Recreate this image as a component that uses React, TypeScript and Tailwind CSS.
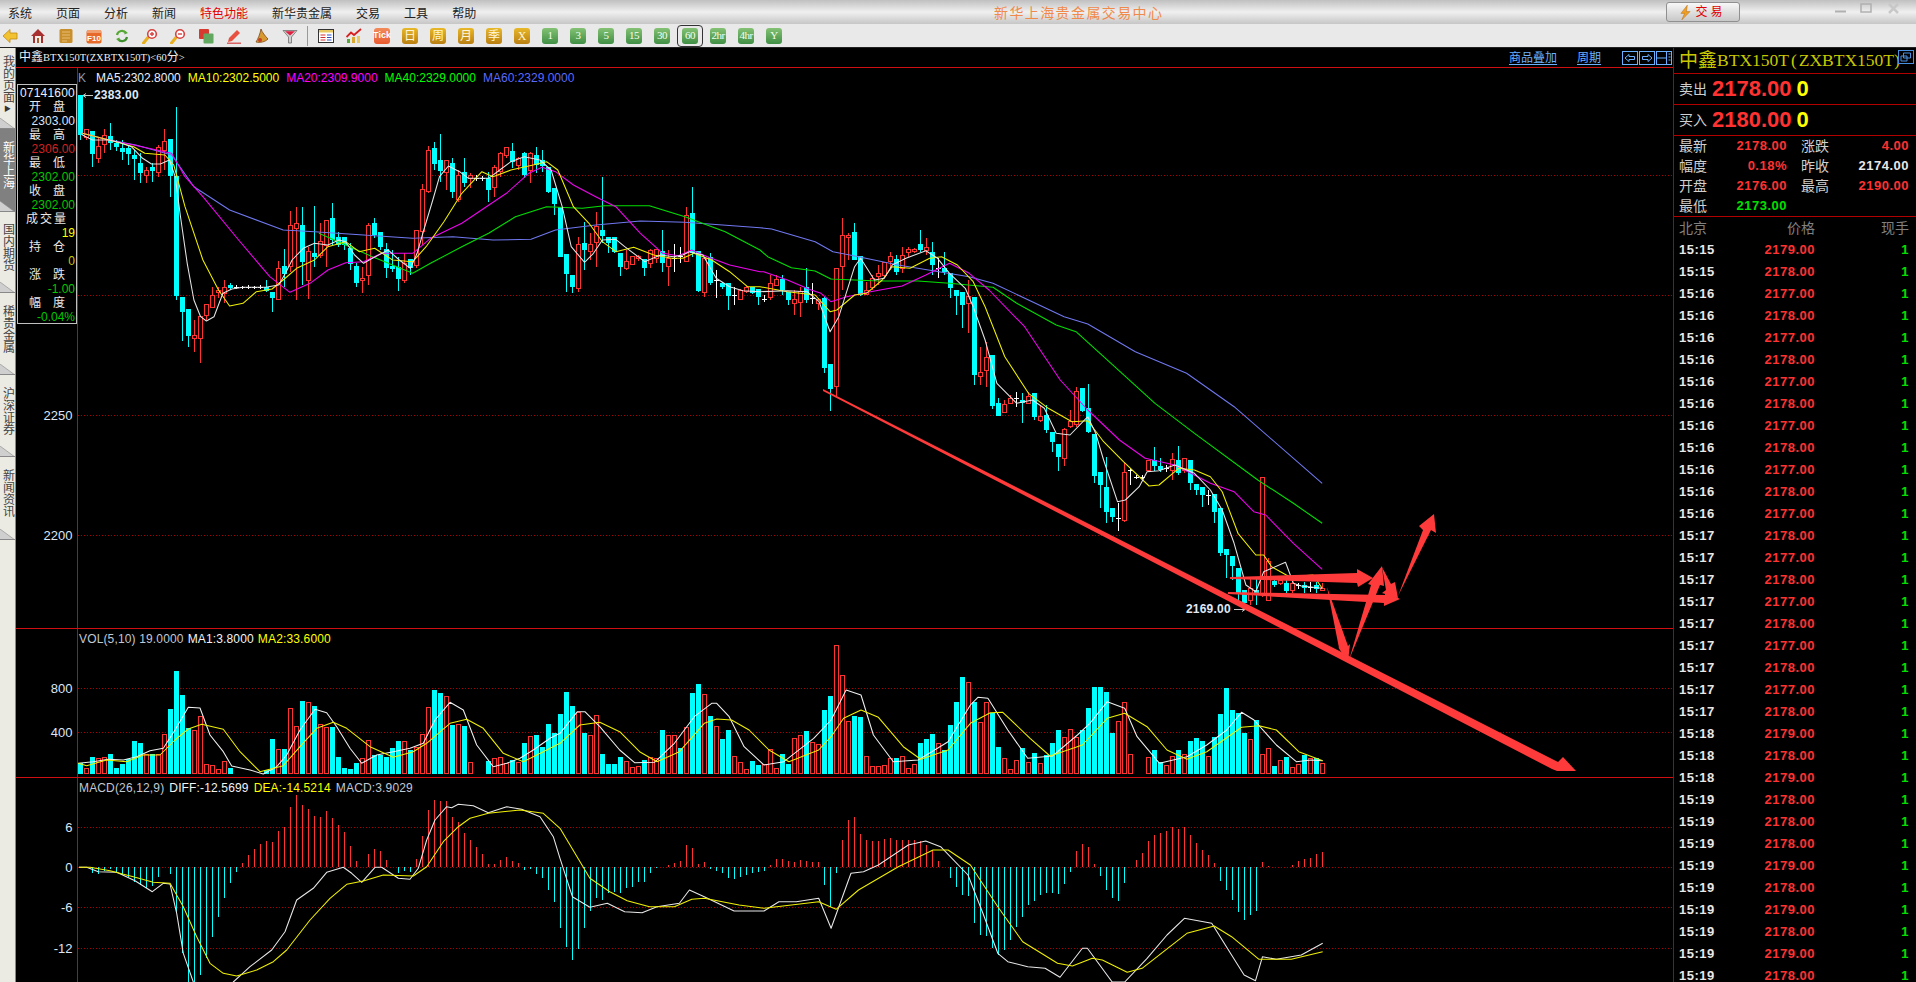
import React from "react";

type Candle = [string, number, number, number, number];
type Pt = [number, number];

const RED = "#ff3232";
const CYAN = "#00ffff";
const slotX = (i: number) => 78 + 6 * i;

// kline bodies traced at 3x: [kind, bodyTop, bodyBottom, wickTop, wickBottom], y = base + v / 3
const candlesA: Candle[] = [
  ["c",15,135,15,150],["r",118,142,118,150],["c",123,192,123,232],["r",168,206,142,220],["r",135,162,118,190],
  ["c",138,160,98,180],["c",158,170,150,182],["c",174,185,150,210],["c",174,192,165,225],["c",196,206,180,270],
  ["c",220,250,190,280],["r",242,256,230,278],["c",230,242,220,275],["r",172,248,165,262],["r",155,180,118,240],
  ["c",148,258,148,320],["c",258,618,52,630],["c",622,665,620,752],["c",657,738,657,772],["r",735,745,690,785],
  ["r",680,745,680,818],["r",643,675,643,690],["r",615,652,590,655],["r",600,608,590,625],["r",592,610,570,640],
  ["c",585,595,578,600],["w",592,592,586,598],["w",592,592,588,596],["w",592,592,586,598],["w",592,592,588,596],
  ["w",592,592,586,598],["c",590,602,570,605],["c",605,623,605,665],["r",535,628,512,630],["c",528,553,477,590],
  ["r",405,530,362,545],["r",400,415,352,630],["c",405,515,350,585],["r",485,570,470,628],["c",490,500,348,530],
  ["r",455,497,400,505],["r",390,465,390,530],["c",385,450,340,465],["c",440,465,425,470],["c",440,465,440,480],
  ["c",475,522,460,540],["c",528,580,520,590],["r",565,572,530,608],["r",405,555,400,585],["c",400,435,385,445],
  ["c",425,472,425,480],["c",478,535,458,565],["c",528,537,480,545],["c",530,568,500,602],["r",520,572,490,580],
  ["c",508,535,508,555],["r",420,525,420,535],["r",298,425,282,465],["r",182,305,168,310],["c",175,222,155,240],
  ["c",210,243,132,275],["r",212,248,212,300],["c",220,305,205,325],["r",255,328,240,335],["c",245,278,205,290],
  ["r",255,265,248,295],["w",263,263,255,272],["w",265,265,258,272],["c",265,300,245,335],["r",232,293,225,320],
  ["r",190,245,185,260],["r",172,197,172,205],["c",183,215,158,235],["r",205,225,200,240],["c",190,255,185,265],
  ["r",190,240,185,280],["c",195,225,170,250],["c",210,228,180,245],["c",232,305,232,310],["c",295,342,295,375],
  ["c",350,500,350,500],["c",492,552,492,605],["c",555,590,555,608],["r",462,595,440,605],["c",458,480,395,540],
  ["r",462,485,430,510],["r",410,458,365,530],["c",420,438,260,460],["c",442,458,442,490],["c",442,487,440,490],
  ["c",490,530,490,558],["r",515,535,480,540],["r",498,522,498,525],["r",500,505,495,512],["c",508,535,508,558],
  ["r",482,520,478,535],["r",478,505,478,520],["c",482,520,420,545],["r",505,530,480,588],["w",505,505,462,545],
  ["w",498,498,470,520],["r",375,515,352,515],["c",370,490,292,500],["c",484,602,484,605],["r",505,608,505,622],
  ["c",500,580,490,585],["w",570,570,540,625],["c",580,590,575,598],["c",578,618,578,660],["w",615,615,590,645],
];

const candlesB: Candle[] = [
  ["r",270,298,268,300],["r",262,275,258,278],["c",260,278,260,282],["c",268,292,268,315],["w",298,298,285,305],
  ["r",250,293,225,300],["r",238,255,225,258],["c",238,270,225,285],["c",275,300,275,315],["r",298,310,270,345],
  ["r",275,308,260,350],["c",262,300,205,310],["w",295,295,250,312],["r",298,310,295,330],["c",295,503,290,520],
  ["c",492,568,492,632],["r",205,560,205,590],["r",105,200,55,270],["r",105,113,100,180],["c",97,180,70,180],
  ["c",168,285,168,288],["r",270,282,245,285],["r",235,262,225,270],["r",220,228,195,255],["r",188,225,188,235],
  ["r",170,185,155,210],["c",178,215,165,225],["r",165,205,140,220],["r",148,158,140,170],["r",148,155,145,160],
  ["c",132,150,90,155],["r",142,150,115,165],["c",155,195,125,225],["w",203,203,175,235],["c",205,215,155,225],
  ["c",220,265,220,295],["c",270,287,270,345],["c",277,315,277,385],["r",288,310,240,400],["c",290,525,290,555],
  ["r",518,530,440,555],["r",472,510,425,560],["c",465,618,465,628],["c",610,648,595,648],["r",612,638,600,640],
  ["r",595,610,585,612],["w",595,595,575,620],["c",600,610,580,668],["r",590,610,575,612],["c",580,652,580,660],
  ["r",648,662,615,665],["c",645,690,615,700],["c",697,725,697,755],["c",732,770,732,812],["r",688,775,685,797],
  ["r",665,678,630,685],["r",575,672,560,680],["c",565,632,565,635],["c",625,697,552,700],["c",702,827,702,848],
  ["c",815,855,815,925],["c",862,935,770,970],["c",925,950,925,965],["w",955,955,910,992],["r",818,962,785,965],
  ["w",810,810,805,855],["w",832,832,825,838],["w",832,832,825,838],["r",782,812,782,815],["c",780,797,740,812],
  ["c",797,810,775,815],["w",805,805,795,815],["r",777,812,760,840],["c",780,818,738,825],["r",775,812,775,818],
  ["c",780,848,780,870],["c",852,870,852,885],["c",860,885,860,920],["w",885,885,870,915],["c",882,935,882,970],
  ["c",925,1058,925,1068],["c",1048,1065,1048,1135],["c",1068,1098,1068,1140],["c",1105,1178,1105,1205],["c",1170,1210,1170,1225],
  ["r",1165,1200,1130,1215],["c",1170,1182,1130,1215],["r",832,1180,832,1190],["r",1085,1200,1075,1200],["c",1142,1155,1130,1160],
  ["r",1140,1150,1130,1155],["c",1150,1172,1130,1180],["r",1150,1170,1140,1180],["w",1155,1155,1148,1168],["c",1155,1165,1145,1180],
  ["w",1160,1160,1145,1175],["c",1155,1167,1145,1180],["r",1165,1170,1150,1172],
];

const candles = [
  ...candlesA.map(([k, a, b, c, d]) => [k, 90 + a / 3, 90 + b / 3, 90 + c / 3, 90 + d / 3] as Candle),
  ...candlesB.map(([k, a, b, c, d]) => [k, 200 + a / 3, 200 + b / 3, 200 + c / 3, 200 + d / 3] as Candle),
];

// volume tops, negative = red hollow bar
const volA = [
  430,-445,411,-415,-412,402,445,432,418,363,369,-403,403,-403,-343,267,153,225,325,-330,-288,-433,-436,-448,-423,444,-460,-460,-460,-461,
  -461,450,357,-388,387,-265,-318,243,-247,258,-313,-322,321,411,444,447,429,-415,-361,405,405,411,384,363,-364,390,-380,-343,-262,210,
  218,-229,315,-313,318,-427,-460,-460,423,-415,-412,-430,420,-426,369,-349,345,380,312,340,
];
const volB = [
  252,186,228,-246,309,-316,-256,372,402,402,381,-393,-412,-409,391,-380,-385,300,-316,-316,354,-292,189,162,-193,258,-289,327,300,-379,
  -397,-418,393,405,-403,-357,-415,372,402,-325,-316,303,-337,-342,240,198,-45,-136,-274,258,260,-379,-408,-408,-405,-384,384,-379,-415,-403,
  339,327,312,-339,360,285,216,141,-156,216,-276,-216,250,351,-385,-417,-391,354,-397,369,-399,375,339,300,-321,-297,-321,300,234,171,
  171,186,309,-273,-216,-372,-429,-429,-381,360,396,-405,-379,360,-372,333,324,333,-379,321,252,174,240,249,309,-327,270,-372,-354,408,
  -390,381,-411,-402,375,-384,384,-400,
];
const volumes = [
  ...volA.map((v) => ({ red: v < 0, top: 620 + Math.abs(v) / 3 })),
  ...volB.map((v) => ({ red: v < 0, top: 630 + Math.abs(v) / 3 })),
];

const macdA = [
  742,742,758,762,752,748,758,765,772,785,795,803,797,772,742,762,880,1000,1086,1086,1065,1015,950,890,835,790,755,
  728,705,687,672,663,666,633,621,561,525,555,567,588,591,574,594,615,636,678,723,742,702,687,693,720,742,
  760,752,755,717,648,570,540,543,543,591,606,639,660,681,702,732,732,720,711,723,729,750,747,763,774,810,845,
];
const macdB = [
  893,950,990,957,895,842,805,810,790,785,788,775,770,755,755,730,714,712,705,698,692,645,653,702,696,716,722,730,745,748,
  742,735,728,725,722,705,686,686,693,697,690,693,696,696,765,830,728,630,570,561,612,630,632,632,628,625,630,630,630,630,
  632,645,660,692,712,745,770,795,797,878,915,918,955,975,960,930,892,862,825,812,795,790,790,792,762,725,662,642,650,702,
  738,780,805,812,760,712,690,670,632,615,608,603,590,597,590,615,638,660,675,700,752,780,810,845,870,855,843,697,708,710,
  710,711,705,693,688,683,672,666,
];
const macdBars = [...macdA.map((v) => 620 + v / 3), ...macdB.map((v) => 630 + v / 3)];

const trace = (ox: number, oy: number, sx: number, v: number[]): Pt[] => {
  const out: Pt[] = [];
  for (let i = 0; i < v.length; i += 2) out.push([ox + v[i] / sx, oy + v[i + 1] / 3]);
  return out;
};
const joinLines = (a: Pt[], b: Pt[]) => a.concat(b.filter((p) => p[0] > a[a.length - 1][0]));
const toPts = (p: Pt[]) => p.map(([x, y]) => `${x.toFixed(1)},${y.toFixed(1)}`).join(" ");

const left = (v: number[]) => trace(60, 90, 2.24, v);
const rightSide = (v: number[]) => trace(740, 200, 2.53, v);

const ma5 = joinLines(
  left([50,135,73,150,110,150,135,158,160,170,185,205,205,222,225,222,245,210,258,260,270,380,285,520,300,630,315,680,328,693,345,680,365,610,385,597,410,592,460,592,490,585,505,550,520,510,545,475,570,460,600,465,625,450,640,455,660,495,680,520,700,505,735,480,760,510,785,535,800,490,815,420,835,330,850,260,870,228,895,245,915,265,960,265,985,240,1010,215,1040,200,1075,210,1100,240,1125,350,1145,470,1175,517,1195,490,1215,450,1245,448,1265,470,1310,515,1345,495,1375,500,1395,495,1410,485,1440,495,1470,565,1500,590,1530,602,1568,605]),
  rightSide([120,272,170,275,200,305,228,395,250,350,290,200,305,175,340,240,365,235,385,195,420,175,470,152,500,175,530,220,570,265,590,320,620,420,650,550,700,610,740,600,770,625,800,700,835,705,880,650,900,700,920,780,955,905,975,900,1010,860,1030,815,1060,812,1100,795,1150,820,1190,870,1220,930,1250,1030,1280,1155,1305,1175,1325,1115,1380,1087,1400,1150,1420,1158,1473,1165]),
);
const ma10 = joinLines(
  left([50,130,110,150,165,170,190,190,235,195,255,225,280,350,320,510,355,600,380,648,410,640,440,605,475,597,500,570,530,535,570,510,600,470,640,455,670,485,705,475,745,510,790,515,820,470,860,395,900,310,945,245,970,260,1010,240,1060,225,1090,215,1115,240,1150,350,1185,400,1215,455,1245,485,1285,472,1330,495,1370,505,1395,505,1420,490,1460,510,1500,545,1540,590,1568,590]),
  rightSide([120,275,190,285,228,335,245,330,290,285,320,280,360,240,385,200,430,205,480,175,510,170,550,195,590,245,620,320,670,470,730,580,780,625,840,665,880,662,920,725,970,785,1035,858,1060,855,1110,805,1150,810,1190,830,1220,875,1260,1000,1305,1065,1325,1065,1345,1100,1390,1130,1450,1125,1473,1165]),
);
const ma20 = joinLines(
  left([50,130,110,150,165,165,250,190,280,260,320,320,400,450,470,560,515,607,560,580,600,540,640,518,680,515,720,490,790,490,830,445,900,400,950,355,1000,310,1050,250,1080,232,1110,245,1150,285,1200,320,1245,350,1300,430,1350,490,1385,497,1415,480,1450,500,1500,525,1568,545]),
  rightSide([60,215,120,240,180,270,205,280,230,305,270,290,330,275,410,258,470,225,530,190,580,220,630,270,720,380,810,540,880,630,960,720,1025,775,1100,795,1190,850,1250,875,1300,935,1330,945,1400,1030,1473,1108]),
);
const ma40 = joinLines(
  left([580,430,640,465,700,500,790,550,830,520,900,470,960,430,1020,380,1090,350,1170,355,1220,347,1320,347,1400,380,1490,425,1568,480]),
  rightSide([70,170,130,203,190,213,230,237,350,243,450,243,530,250,640,262,700,310,800,375,850,395,920,470,1050,610,1150,700,1310,840,1400,910,1473,970]),
);
const ma60 = joinLines(
  left([50,130,110,150,170,165,250,195,300,290,380,360,500,420,570,425,680,435,790,445,880,440,970,450,1055,448,1110,420,1200,405,1300,393,1400,397,1568,413]),
  rightSide([80,87,190,125,235,155,300,170,400,195,580,230,640,250,820,350,880,372,1000,455,1130,520,1250,620,1473,850]),
);

const volLeft = (v: number[]) => trace(60, 620, 3, v);
const volRight = (v: number[]) => trace(560, 630, 2.01, v);
const vol1 = joinLines(
  volLeft([55,430,100,425,145,418,190,420,230,410,270,392,310,385,345,330,385,262,420,264,450,345,490,395,515,438,570,450,610,462,650,440,680,405,720,330,765,268,800,278,830,320,870,385,905,430,950,405,1000,395,1050,385,1090,370,1125,300,1170,247,1210,270,1250,375,1300,440,1340,430,1380,415,1420,390,1470,355,1500,340]),
  volRight([35,245,50,245,80,290,120,360,150,398,190,397,230,340,270,260,305,220,315,220,340,260,370,350,410,405,450,395,510,325,545,270,575,180,605,195,630,315,670,395,720,390,780,335,825,225,840,202,860,205,900,300,940,385,990,378,1040,315,1065,280,1100,215,1135,235,1160,320,1205,400,1260,380,1300,345,1340,300,1370,247,1395,270,1440,345,1480,395,1510,390,1533,392]),
);
const vol2 = joinLines(
  volLeft([55,430,80,437,140,420,200,425,250,405,300,405,345,360,385,327,425,313,490,328,540,395,600,455,670,437,720,380,770,325,820,307,860,325,930,380,1000,412,1060,395,1100,370,1170,310,1220,298,1270,325,1330,400,1390,425,1450,395,1500,370]),
  volRight([40,285,80,277,120,305,160,365,195,395,240,365,290,280,315,267,345,270,380,300,420,360,460,395,520,360,545,320,570,265,605,240,640,262,690,350,725,388,780,360,825,280,865,248,890,247,945,325,985,378,1050,345,1100,265,1135,250,1180,290,1220,360,1260,388,1300,365,1370,292,1405,287,1440,300,1485,365,1533,392]),
);
const diff = joinLines(
  volLeft([57,742,80,742,115,755,170,757,225,782,277,815,310,790,330,792,350,880,370,1000,400,1086,410,1130,510,1130,520,1086,570,1040,635,990,675,935,710,840,760,805,800,757,850,742,875,760,905,787,945,742,965,742,1015,775,1050,778,1075,745,1100,660,1125,600,1160,560,1175,563,1195,553,1240,557,1285,578,1340,560,1385,568,1440,590,1480,650,1500,715]),
  volRight([25,800,60,832,95,820,130,845,165,848,195,830,240,820,260,780,290,800,350,843,410,843,440,815,475,815,520,805,545,895,585,730,610,725,640,705,700,645,735,633,765,650,820,735,850,850,880,970,900,995,940,1010,975,1015,1005,1042,1050,955,1060,955,1110,1056,1135,1056,1180,985,1220,915,1255,865,1310,880,1375,1035,1398,1052,1412,980,1440,988,1490,975,1533,940]),
);
const dea = joinLines(
  volLeft([57,742,90,742,150,752,220,770,280,787,330,790,370,860,410,950,450,1030,490,1060,530,1068,590,1050,640,1025,680,990,750,900,810,835,860,793,910,783,970,765,1060,768,1100,740,1150,665,1195,620,1230,595,1285,580,1380,570,1450,580,1500,625]),
  volRight([60,745,100,785,135,812,180,830,230,830,265,808,290,805,360,825,410,835,520,815,555,838,600,780,680,710,750,660,780,660,825,705,880,830,930,935,1000,1000,1030,1008,1070,985,1090,990,1140,1027,1170,1015,1260,910,1315,888,1350,920,1405,988,1470,988,1533,965]),
);

const ticks: [string, string][] = [
  ["15:15","2179.00"],["15:15","2178.00"],["15:16","2177.00"],["15:16","2178.00"],["15:16","2177.00"],["15:16","2178.00"],
  ["15:16","2177.00"],["15:16","2178.00"],["15:16","2177.00"],["15:16","2178.00"],["15:16","2177.00"],["15:16","2178.00"],
  ["15:16","2177.00"],["15:17","2178.00"],["15:17","2177.00"],["15:17","2178.00"],["15:17","2177.00"],["15:17","2178.00"],
  ["15:17","2177.00"],["15:17","2178.00"],["15:17","2177.00"],["15:17","2178.00"],["15:18","2179.00"],["15:18","2178.00"],
  ["15:18","2179.00"],["15:19","2178.00"],["15:19","2178.00"],["15:19","2178.00"],["15:19","2179.00"],["15:19","2178.00"],
  ["15:19","2179.00"],["15:19","2178.00"],["15:19","2179.00"],["15:19","2178.00"],
];

const menus = ["系统", "页面", "分析", "新闻", "特色功能", "新华贵金属", "交易", "工具", "帮助"];

function Gold({ children }: { children: React.ReactNode }) {
  return (
    <div className="flex h-4 w-4 items-center justify-center rounded-[3px] bg-gradient-to-b from-[#e8b82a] to-[#b97f12] text-[12px] leading-none text-[#fff6d8]">
      {children}
    </div>
  );
}

function Green({ children }: { children: React.ReactNode }) {
  return (
    <div className="flex h-4 w-4 items-center justify-center rounded-[3px] bg-gradient-to-b from-[#84c274] to-[#3f8f45] text-[11px] leading-none tracking-[-0.5px] text-[#f2fff0]">
      {children}
    </div>
  );
}

function Ico({ children }: { children: React.ReactNode }) {
  return (
    <svg viewBox="0 0 16 16" className="h-4 w-4 shrink-0">
      {children}
    </svg>
  );
}

function Toolbar() {
  return (
    <div className="flex h-[23px] items-center gap-[12px] bg-[#e9e9e9] pl-[2px] [font-family:'Liberation_Serif','Noto_Sans_CJK_SC',serif]">
      <Ico><path d="M1 8 8 1.5V5h7v6H8v3.5z" fill="#f2c230" stroke="#c08a10" strokeWidth="0.8" /></Ico>
      <Ico>
        <path d="M8 1 1 8h2v7h10V8h2z" fill="#a83030" />
        <path d="M5 8h6v7H5z" fill="#f4eee6" />
        <path d="M7 10h2v5H7z" fill="#a85a30" />
      </Ico>
      <Ico>
        <rect x="1.5" y="1" width="13" height="14" rx="1.5" fill="#c98f2c" />
        <path d="M4 4h8M4 7h8M4 10h8M4 13h5" stroke="#e6bd70" strokeWidth="1" />
      </Ico>
      <Ico>
        <rect x="0.5" y="2" width="15" height="13.5" rx="2" fill="#e86a2a" />
        <path d="M1 2h14v3H1z" fill="#f0a070" />
        <text x="8" y="13" textAnchor="middle" fontSize="8" fontWeight="700" fill="#fff" fontFamily="Liberation Sans">F10</text>
      </Ico>
      <Ico>
        <path d="M3 7a5 5 0 0 1 9-2" fill="none" stroke="#58a838" strokeWidth="2.2" />
        <path d="M13 9a5 5 0 0 1-9 2" fill="none" stroke="#3f8f30" strokeWidth="2.2" />
        <path d="M10.5 2.5 14 5l-3.5 1.5zM5.5 13.5 2 11l3.5-1.5z" fill="#58a838" />
      </Ico>
      <Ico>
        <path d="M1.5 15 6 9.5" stroke="#e8b020" strokeWidth="3" strokeLinecap="round" />
        <circle cx="10" cy="6" r="4.3" fill="#fff" stroke="#d84040" strokeWidth="1.6" />
        <path d="M8 6h4M10 4v4" stroke="#d84040" strokeWidth="1.4" />
      </Ico>
      <Ico>
        <path d="M1.5 15 6 9.5" stroke="#e8b020" strokeWidth="3" strokeLinecap="round" />
        <circle cx="10" cy="6" r="4.3" fill="#fff" stroke="#d84040" strokeWidth="1.6" />
        <path d="M8 6h4" stroke="#d84040" strokeWidth="1.4" />
      </Ico>
      <Ico>
        <rect x="1" y="1" width="10" height="10" rx="1" fill="#d83a30" />
        <rect x="5.5" y="5.5" width="10" height="10" rx="1" fill="#62a860" />
      </Ico>
      <Ico>
        <path d="M3 10 11 2l3 3-8 8-4 1z" fill="#e85040" />
        <path d="M1 15.2h14" stroke="#d84040" strokeWidth="1.2" />
      </Ico>
      <Ico>
        <path d="M7 1c1 3 4 7 7 10-3 3-8 4-12 3 2-3 4-8 5-13z" fill="#d89a30" stroke="#7a4a18" strokeWidth="0.8" />
        <circle cx="6" cy="12" r="2" fill="#c04020" />
      </Ico>
      <Ico>
        <path d="M1 2.5h14L9.5 9v6h-3V9z" fill="#d0d0d0" stroke="#707070" strokeWidth="0.8" />
        <path d="M3 3.2h10L8 7.5z" fill="#e02040" />
      </Ico>
      <div className="-ml-[3px] -mr-[2px] h-[20px] w-[1px] bg-[#999]" />
      <Ico>
        <rect x="0.5" y="1.5" width="15" height="13" fill="#fff" stroke="#333" />
        <path d="M1 2h14v2.5H1z" fill="#e8c860" />
        <path d="M2.5 7h5M2.5 9.5h5M2.5 12h5" stroke="#d03030" />
        <path d="M9 7h4.5M9 9.5h4.5M9 12h4.5" stroke="#3050c0" />
      </Ico>
      <Ico>
        <rect x="1" y="11" width="3" height="4" fill="#58a838" />
        <rect x="6" y="9" width="3" height="6" fill="#d8a830" />
        <rect x="11" y="8" width="3" height="7" fill="#e8c860" />
        <path d="M0.5 9 5 4.5 8 7l7-6" fill="none" stroke="#d82020" strokeWidth="1.8" />
      </Ico>
      <div className="flex h-4 w-4 items-center justify-center rounded-[3px] bg-gradient-to-b from-[#f28a5a] to-[#e85a30] text-[9px] font-bold leading-none text-white [font-family:'Liberation_Sans',sans-serif]">
        Tick
      </div>
      <Gold>日</Gold>
      <Gold>周</Gold>
      <Gold>月</Gold>
      <Gold>季</Gold>
      <Gold>X</Gold>
      <Green>1</Green>
      <Green>3</Green>
      <Green>5</Green>
      <Green>15</Green>
      <Green>30</Green>
      <div className="relative">
        <Green>60</Green>
        <span className="absolute -inset-x-[5px] -inset-y-[3px] rounded-[4px] border border-[#333]" />
      </div>
      <Green>2hr</Green>
      <Green>4hr</Green>
      <Green>Y</Green>
    </div>
  );
}

function SideTab({ label, h, active, mark }: { label: string; h: string; active?: boolean; mark?: boolean }) {
  return (
    <div className={`flex flex-col items-center ${h} ${active ? "bg-[#808080] text-white" : "text-[#444]"}`}>
      <div className="flex flex-1 flex-col items-center justify-center">
        <span className="text-[12px] leading-[12px] [writing-mode:vertical-rl]">{label}</span>
        {mark && <span className="mt-[2px] text-[7px] leading-[7px] text-[#333]">▶</span>}
      </div>
      <svg viewBox="0 0 15 11" className="h-[11px] w-[15px] shrink-0">
        <path d="M0 0 15 11H0z" fill="#cfcfcf" />
        <path d="M0 0 15 11" stroke="#888" strokeWidth="0.6" />
        <path d="M0 10.5h15" stroke="#888" />
      </svg>
    </div>
  );
}

function Sidebar() {
  return (
    <div className="flex w-[16px] shrink-0 flex-col border-r border-[#888] bg-[#ecebe3] pt-[1px]">
      <SideTab label="我的页面" h="h-[80px]" mark />
      <SideTab label="新华上海" h="h-[83px]" active />
      <SideTab label="国内期货" h="h-[81px]" />
      <SideTab label="稀贵金属" h="h-[82px]" />
      <SideTab label="沪深证券" h="h-[82px]" />
      <SideTab label="新闻资讯" h="h-[83px]" />
    </div>
  );
}

function Grid({ ys }: { ys: number[] }) {
  return (
    <>
      {ys.map((y) => (
        <line key={y} x1={78} x2={1673} y1={y + 0.5} y2={y + 0.5} stroke="#a80000" strokeDasharray="1 2" />
      ))}
      <line x1={77.5} x2={77.5} y1={40} y2={990} stroke="#c80808" />
    </>
  );
}

function AxisLabel({ y, children }: { y: number; children: React.ReactNode }) {
  return (
    <text x={72.5} y={y + 5} textAnchor="end" fontSize={13} fill="#dde6f6" fontFamily="Liberation Sans">
      {children}
    </text>
  );
}

function Line({ pts, color }: { pts: Pt[]; color: string }) {
  return <polyline points={toPts(pts)} fill="none" stroke={color} strokeWidth={1.05} strokeLinejoin="round" />;
}

function PricePane() {
  return (
    <div className="relative h-[561px] border-b border-[#d01010]">
      <svg viewBox="16 68 1657 560" className="block h-[560px] w-full">
        <Grid ys={[175, 295, 415, 535]} />
        <AxisLabel y={415}>2250</AxisLabel>
        <AxisLabel y={535}>2200</AxisLabel>
        {candles.map(([k, top, bot, wt, wb], i) => {
          const x = slotX(i);
          if (k === "w")
            return (
              <g key={i} stroke="#fff" shapeRendering="crispEdges">
                <line x1={x + 2.5} x2={x + 2.5} y1={wt} y2={wb} />
                <line x1={x} x2={x + 5} y1={Math.round(top) + 0.5} y2={Math.round(top) + 0.5} />
              </g>
            );
          const color = k === "c" ? CYAN : RED;
          return (
            <g key={i} shapeRendering="crispEdges">
              <line x1={x + 2.5} x2={x + 2.5} y1={wt} y2={wb} stroke={color} />
              {k === "c" ? (
                <rect x={x} y={top} width={5} height={Math.max(bot - top, 1)} fill={CYAN} />
              ) : (
                <rect x={x + 0.5} y={top} width={4} height={Math.max(bot - top, 1)} fill="#000" stroke={RED} />
              )}
            </g>
          );
        })}
        <Line pts={ma60} color="#7078f0" />
        <Line pts={ma40} color="#00e000" />
        <Line pts={ma20} color="#f000f0" />
        <Line pts={ma10} color="#f0f000" />
        <Line pts={ma5} color="#e4e4e4" />
        <path d="M83 95.5h10M83 95.5l3-2M83 95.5l3 2" stroke="#c8c8c8" fill="none" />
        <path d="M1234 609.5h11M1245 609.5l-3-2M1245 609.5l-3 2" stroke="#c8c8c8" fill="none" />
      </svg>
      <div className="absolute left-[62px] top-[3px] flex gap-[7px] text-[12px] leading-[14px]">
        <span className="text-[#8a9ab0]">K</span>
        <span className="ml-[3px] text-[#e8f0ff]">MA5:2302.8000</span>
        <span className="text-[#ffff00]">MA10:2302.5000</span>
        <span className="text-[#ff00ff]">MA20:2309.9000</span>
        <span className="text-[#00ff00]">MA40:2329.0000</span>
        <span className="text-[#5a6aff]">MA60:2329.0000</span>
      </div>
      <span className="absolute left-[78px] top-[20px] text-[12px] font-bold leading-[14px] tracking-[0.2px] text-[#dfe8f8]">2383.00</span>
      <span className="absolute left-[1170px] top-[534px] text-[12px] font-bold leading-[14px] tracking-[0.2px] text-[#dfe8f8]">2169.00</span>
      <InfoBox />
    </div>
  );
}

function InfoBox() {
  const rows: [string, string, string][] = [
    ["开　盘", "2303.00", "text-[#d8e4f8]"],
    ["最　高", "2306.00", "text-[#d02020]"],
    ["最　低", "2302.00", "text-[#00c800]"],
    ["收　盘", "2302.00", "text-[#00c800]"],
    ["成交量", "19", "text-[#ffff00]"],
    ["持　仓", "0", "text-[#c8c800]"],
    ["涨　跌", "-1.00", "text-[#00c800]"],
    ["幅　度", "-0.04%", "text-[#00c800]"],
  ];
  return (
    <div className="absolute left-[1px] top-[16px] h-[240px] w-[60px] border border-[#c0c0c0] bg-black pt-[1px] text-[12px] leading-[14px] text-white">
      <div className="pr-[1px] text-right tracking-[0.2px] text-[#e8f0ff]">07141600</div>
      {rows.map(([a, b, c]) => (
        <div key={a}>
          <div className={`h-[14px] text-center text-[#e8e8e8] ${a === "成交量" ? "tracking-[2px]" : ""}`}>{a}</div>
          <div className={`h-[14px] pr-[1px] text-right ${c}`}>{b}</div>
        </div>
      ))}
    </div>
  );
}

function VolPane() {
  return (
    <div className="relative h-[149px] border-b border-[#d01010]">
      <svg viewBox="16 629 1657 148" className="block h-[148px] w-full">
        <Grid ys={[688, 732]} />
        <AxisLabel y={688}>800</AxisLabel>
        <AxisLabel y={732}>400</AxisLabel>
        {volumes.map((v, i) =>
          v.red ? (
            <rect key={i} x={slotX(i) + 0.5} y={Math.round(v.top) + 0.5} width={4} height={Math.max(774 - Math.round(v.top) - 1, 0)} fill="#000" stroke={RED} shapeRendering="crispEdges" />
          ) : (
            <rect key={i} x={slotX(i)} y={v.top} width={5} height={774 - v.top} fill={CYAN} shapeRendering="crispEdges" />
          ),
        )}
        <Line pts={vol1} color="#f0f0f0" />
        <Line pts={vol2} color="#f0f000" />
      </svg>
      <div className="absolute left-[63px] top-[3px] flex gap-[4px] text-[12px] leading-[14px] tracking-[0.15px]">
        <span className="text-[#c0c8d4]">VOL(5,10) 19.0000</span>
        <span className="text-[#f4f4f4]">MA1:3.8000</span>
        <span className="text-[#ffff00]">MA2:33.6000</span>
      </div>
    </div>
  );
}

function MacdPane() {
  return (
    <div className="relative flex-1 overflow-hidden">
      <svg viewBox="16 778 1657 204" className="block h-[204px] w-full">
        <Grid ys={[827, 867, 907, 948]} />
        <AxisLabel y={827}>6</AxisLabel>
        <AxisLabel y={867}>0</AxisLabel>
        <AxisLabel y={907}>-6</AxisLabel>
        <AxisLabel y={948}>-12</AxisLabel>
        {macdBars.map((y, i) => (
          <line key={i} x1={slotX(i) + 2.5} x2={slotX(i) + 2.5} y1={867} y2={y} stroke={y < 867 ? RED : CYAN} shapeRendering="crispEdges" />
        ))}
        <Line pts={diff} color="#e8e8e8" />
        <Line pts={dea} color="#f0f000" />
      </svg>
      <div className="absolute left-[63px] top-[3px] flex gap-[5px] text-[12px] leading-[14px] tracking-[0.15px]">
        <span className="text-[#c0c8d4]">MACD(26,12,9)</span>
        <span className="text-[#f4f4f4]">DIFF:-12.5699</span>
        <span className="text-[#ffff00]">DEA:-14.5214</span>
        <span className="text-[#c0c8d4]">MACD:3.9029</span>
      </div>
    </div>
  );
}

function Arrows() {
  return (
    <svg viewBox="16 48 1657 934" className="absolute left-0 top-0 h-[934px] w-[1657px]" fill="#ff3a3a">
      <polygon points="823,389 1558,762 1563,757 1576,771 1557,771 1552,769 823,391" />
      <polygon points="1230,577 1357,573 1357,569 1373,578 1358,587 1357,583 1230,579" />
      <polygon points="1228,592 1385,595 1385,591 1400,599 1384,606 1384,603 1228,594" />
      <polygon points="1327,587 1348,646 1350,644 1348,662 1338,647 1339,648" />
      <polygon points="1349,660 1371,585 1368,584 1382,566 1384,586 1380,585" />
      <polygon points="1382,567 1391,584 1395,582 1398,598 1382,593 1386,590" />
      <polygon points="1398,596 1423,530 1419,526 1434,514 1436,533 1431,530" />
    </svg>
  );
}

function PanelIcon({ children }: { children: React.ReactNode }) {
  return (
    <svg viewBox="0 0 16 14" className="h-[14px] w-[16px]" fill="none" stroke="#6ab0ff">
      <rect x="0.5" y="0.5" width="15" height="13" />
      {children}
    </svg>
  );
}

function ChartArea() {
  return (
    <div className="relative flex min-w-0 flex-1 flex-col">
      <div className="flex h-[20px] items-center justify-between border-b border-[#d01010] pl-[3px] pr-[1px]">
        <span className="text-[10.5px] leading-none text-[#f0f0f0] [font-family:'Liberation_Serif','Noto_Sans_CJK_SC',serif]">
          <span className="text-[12px]">中鑫</span>BTX150T(ZXBTX150T)&lt;60<span className="text-[12px]">分</span>&gt;
        </span>
        <div className="flex items-center text-[#6ab0ff]">
          <span className="text-[12px] underline underline-offset-2">商品叠加</span>
          <span className="ml-[20px] text-[12px] underline underline-offset-2">周期</span>
          <div className="ml-[21px] flex gap-[1px]">
            <PanelIcon><path d="M12.5 5.5H7v-2L3 7l4 3.5v-2h5.5z" /></PanelIcon>
            <PanelIcon><path d="M3.5 5.5H9v-2L13 7l-4 3.5v-2H3.5z" /></PanelIcon>
            <PanelIcon><path d="M1 7h9M10.5 1v12M12.5 3h2M12.5 6h2M12.5 9h2" /></PanelIcon>
          </div>
        </div>
      </div>
      <PricePane />
      <VolPane />
      <MacdPane />
      <Arrows />
    </div>
  );
}

function Stat({ label, value, color }: { label: string; value: string; color: string }) {
  return (
    <div className="flex w-[108px] items-center justify-between">
      <span className="text-[14px] text-[#d0d0d0]">{label}</span>
      <span className={`text-[13px] font-bold tracking-[0.5px] ${color}`}>{value}</span>
    </div>
  );
}

function QuotePanel() {
  return (
    <div className="flex w-[243px] shrink-0 flex-col overflow-hidden border-l border-[#b00000] bg-black">
      <div className="relative flex h-[26px] shrink-0 items-center whitespace-nowrap border-b border-[#b00000] pl-[5px] text-[17.5px] leading-none text-[#c8c800] [font-family:'Liberation_Serif','Noto_Sans_CJK_SC',serif]">
        <span className="text-[19px]">中鑫</span>BTX150T<span className="mx-[2px]">(</span>ZXBTX150T)
        <svg viewBox="0 0 16 14" className="absolute right-[2px] top-[2px] h-[14px] w-[16px] bg-black" fill="none" stroke="#4a90e0">
          <rect x="0.5" y="0.5" width="15" height="13" />
          <path d="M5.5 3h7v5h-7zM3 6h6v5H3z" />
        </svg>
      </div>
      {[
        ["卖出", "2178.00"],
        ["买入", "2180.00"],
      ].map(([label, price]) => (
        <div key={label} className="flex h-[31px] shrink-0 items-center border-b border-[#b00000] pl-[5px]">
          <span className="w-[33px] text-[14px] text-[#d0d0d0]">{label}</span>
          <span className="text-[22px] font-bold leading-none text-[#ff3232]">{price}</span>
          <span className="ml-[5px] text-[22px] font-bold leading-none text-[#ffff00]">0</span>
        </div>
      ))}
      <div className="flex h-[81px] shrink-0 flex-col border-b border-[#b00000] pl-[5px]">
        {[
          [["最新", "2178.00", "text-[#ff3232]"], ["涨跌", "4.00", "text-[#ff3232]"]],
          [["幅度", "0.18%", "text-[#ff3232]"], ["昨收", "2174.00", "text-[#e8e8e8]"]],
          [["开盘", "2176.00", "text-[#ff3232]"], ["最高", "2190.00", "text-[#ff3232]"]],
          [["最低", "2173.00", "text-[#00e000]"]],
        ].map((row, i) => (
          <div key={i} className="flex h-[20px] items-center gap-[14px]">
            {row.map(([l, v, c]) => (
              <Stat key={l} label={l} value={v} color={c} />
            ))}
          </div>
        ))}
      </div>
      <div className="flex h-[22px] shrink-0 items-center pl-[5px] text-[14px] text-[#808080]">
        <span className="w-[60px]">北京</span>
        <span className="w-[76px] text-right">价格</span>
        <span className="w-[94px] text-right">现手</span>
      </div>
      {ticks.map(([t, p], i) => (
        <div key={i} className="flex h-[22px] shrink-0 items-center pl-[5px] text-[13px] font-bold tracking-[0.5px]">
          <span className="w-[60px] text-[#e8e8e8]">{t}</span>
          <span className="w-[76px] text-right text-[#ff3232]">{p}</span>
          <span className="w-[94px] text-right text-[#00e000]">1</span>
        </div>
      ))}
    </div>
  );
}

function MenuBar() {
  return (
    <div className="relative flex h-[24px] items-center bg-gradient-to-b from-[#c0c0c0] via-[#f0f0f0] to-[#c6c6c6] pl-[8px] pt-[3px] text-[12px] text-[#222]">
      <div className="flex gap-[24px]">
        {menus.map((m) => (
          <span key={m} className={m === "特色功能" ? "text-[#e00000]" : ""}>
            {m}
          </span>
        ))}
      </div>
      <span className="absolute left-[994px] top-[4px] text-[14px] leading-[18px] tracking-[1.4px] text-[#f08a4a]">
        新华上海贵金属交易中心
      </span>
      <div className="absolute left-[1666px] top-[2px] flex h-[20px] w-[74px] items-center justify-center gap-[4px] rounded-[3px] border border-[#909090] bg-gradient-to-b from-[#f8f8f8] to-[#c8c8c8]">
        <svg viewBox="0 0 12 16" className="h-[15px] w-[11px]">
          <path d="M8 0 1 9h4l-3 7 9-9H7z" fill="#f0a020" stroke="#b06010" strokeWidth="0.5" />
        </svg>
        <span className="text-[12px] tracking-[3px] text-[#e00000]">交易</span>
      </div>
      <svg viewBox="0 0 86 14" className="absolute left-[1830px] top-[2px] h-[14px] w-[86px]" fill="none" stroke="#fff" strokeWidth="1.5">
        <path d="M5 9.5h11" stroke="#b0b0b0" strokeWidth="2" />
        <rect x="31" y="2" width="10" height="8" stroke="#b0b0b0" />
        <path d="M59 2l9 9M68 2l-9 9" stroke="#c8c8c8" strokeWidth="2.5" />
      </svg>
    </div>
  );
}

export default function App() {
  return (
    <div className="flex h-[982px] w-[1916px] flex-col overflow-hidden bg-black text-white [font-family:'Liberation_Sans','Noto_Sans_CJK_SC',sans-serif]">
      <MenuBar />
      <Toolbar />
      <div className="h-[1px] bg-[#222]" />
      <div className="flex min-h-0 flex-1">
        <Sidebar />
        <ChartArea />
        <QuotePanel />
      </div>
    </div>
  );
}
